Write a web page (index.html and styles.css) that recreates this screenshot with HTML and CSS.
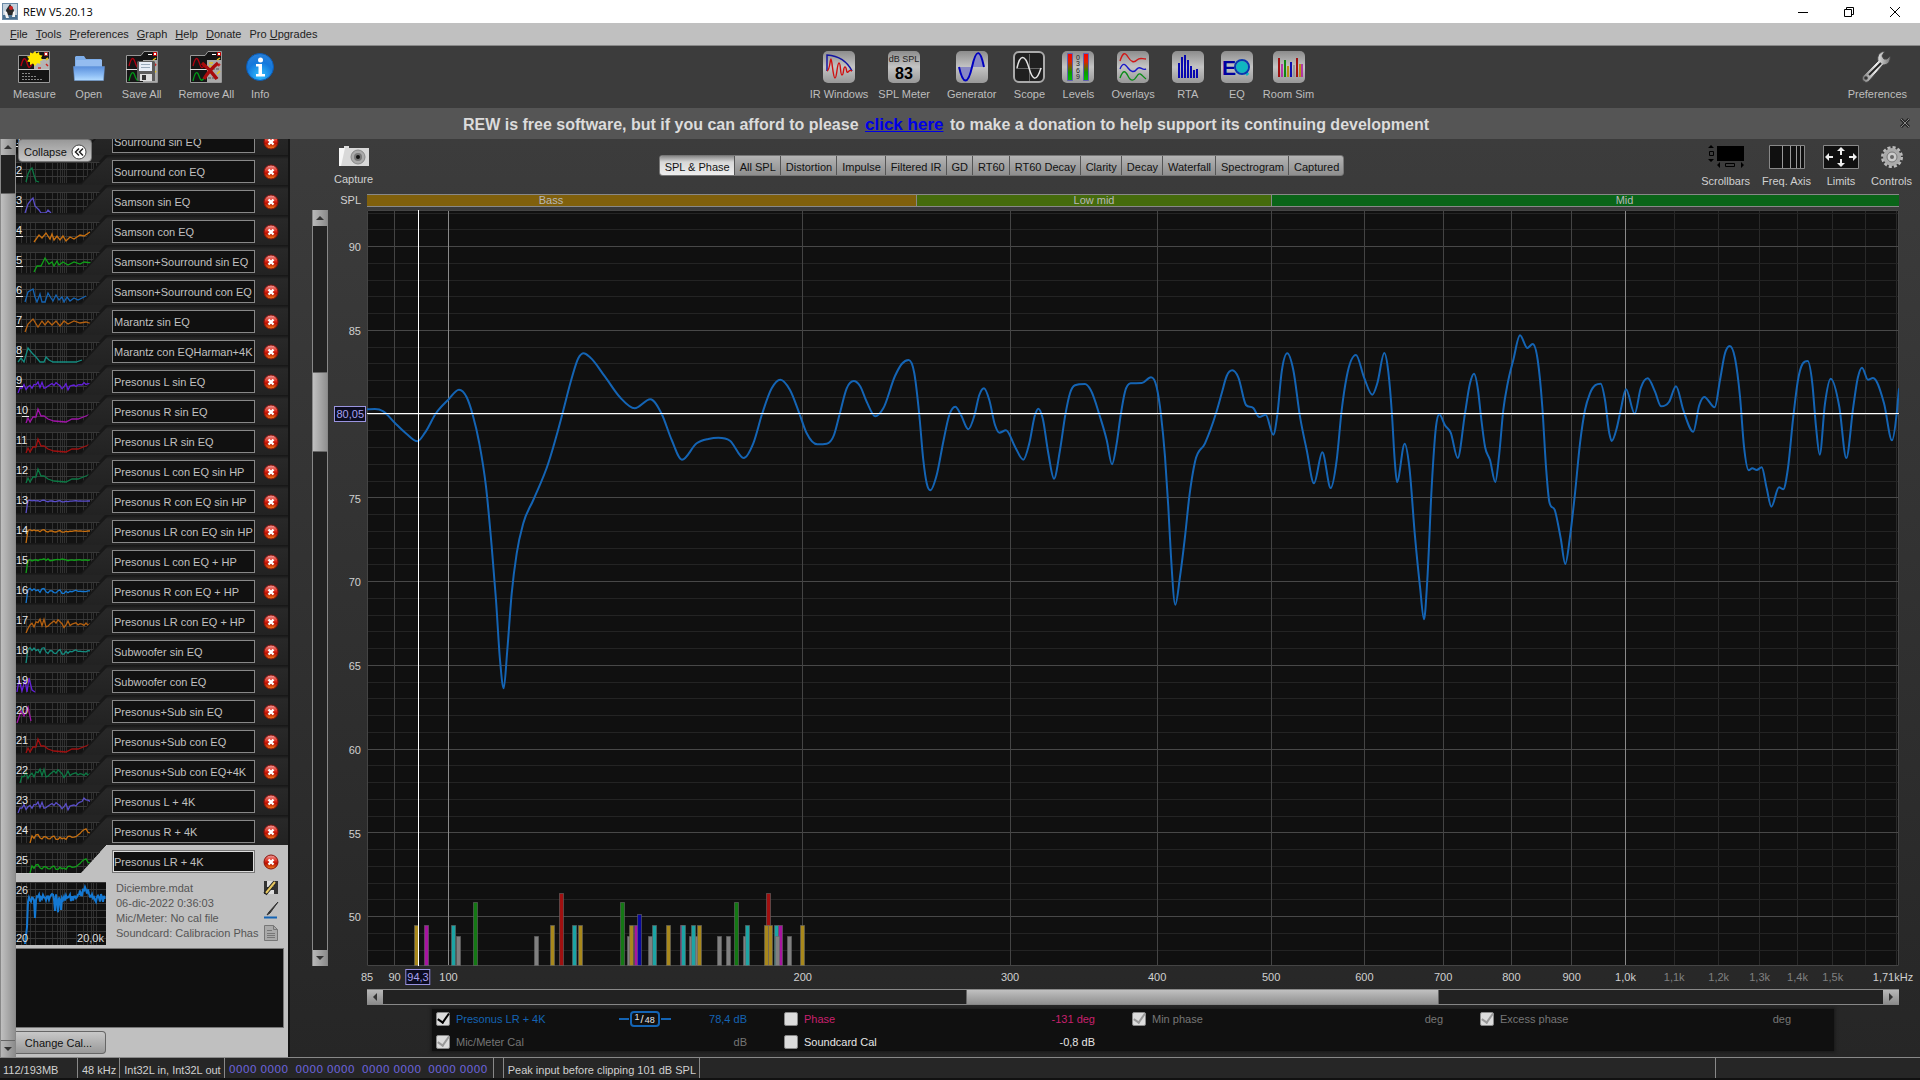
FILE: index.html
```html
<!DOCTYPE html>
<html lang="en">
<head>
    <meta charset="UTF-8">
    <meta name="viewport" content="width=device-width, initial-scale=1.0">
    <title>REW V5.20.13</title>
    <link rel="stylesheet" href="styles.css">
</head>
<body>
    <header class="titlebar">
        <svg class="app-icon" width="16" height="17" viewBox="0 0 16 17">
            <rect x="0.5" y="0.5" width="15" height="16" fill="#c4d2de" stroke="#6b8aa6"/>
            <path d="M1 12h14v4H1z" fill="#4a7090"/>
            <path d="M8 1l4 6-1 5H5L4 7z" fill="#2b2b2b"/>
            <circle cx="9" cy="5" r="2" fill="#c22"/>
            <path d="M2 8l3 1 2 6H4zM11 9l2-1v6h-3z" fill="#f4f4f4"/>
        </svg>
        <span class="app-title">REW V5.20.13</span>
        <div class="window-buttons">
            <button type="button" aria-label="Minimize"><svg width="12" height="12"><path d="M1 6.5h10" stroke="#000"/></svg></button>
            <button type="button" aria-label="Restore"><svg width="12" height="12"><path d="M1.5 3.5h7v7h-7zM3.500 3V1.500h7v7H9" fill="none" stroke="#000"/></svg></button>
            <button type="button" aria-label="Close"><svg width="12" height="12"><path d="M1 1l10 10M11 1L1 11" stroke="#000"/></svg></button>
        </div>
    </header>

    <nav class="menubar">
        <a href="#"><u>F</u>ile</a>
        <a href="#"><u>T</u>ools</a>
        <a href="#"><u>P</u>references</a>
        <a href="#"><u>G</u>raph</a>
        <a href="#"><u>H</u>elp</a>
        <a href="#"><u>D</u>onate</a>
        <a href="#">Pro <u>U</u>pgrades</a>
    </nav>

    <!-- Shared gradients and shapes -->
    <svg class="defs" width="0" height="0" aria-hidden="true">
        <defs>
            <linearGradient id="tile" x1="0" y1="0" x2="0" y2="1"><stop offset="0" stop-color="#8c8c8c"/><stop offset="0.5" stop-color="#c4c4c4"/><stop offset="1" stop-color="#989898"/></linearGradient>
            <linearGradient id="meter" x1="0" y1="0" x2="0" y2="1"><stop offset="0" stop-color="#f00"/><stop offset="0.3" stop-color="#e02000"/><stop offset="0.7" stop-color="#0a9a00"/><stop offset="1" stop-color="#00c000"/></linearGradient>
            <linearGradient id="folder" x1="0" y1="0" x2="0" y2="1"><stop offset="0" stop-color="#5a8fdc"/><stop offset="0.6" stop-color="#8cbcf4"/><stop offset="1" stop-color="#b4dcff"/></linearGradient>
            <linearGradient id="metal" x1="0" y1="0" x2="1" y2="0"><stop offset="0" stop-color="#777"/><stop offset="0.5" stop-color="#eee"/><stop offset="1" stop-color="#777"/></linearGradient>
            <linearGradient id="redball" x1="0" y1="0" x2="0" y2="1"><stop offset="0" stop-color="#f0a0a0"/><stop offset="0.45" stop-color="#d82818"/><stop offset="0.6" stop-color="#b81000"/><stop offset="1" stop-color="#f08020"/></linearGradient>
            <radialGradient id="blueball" cx="0.5" cy="0.8" r="0.8"><stop offset="0" stop-color="#30c0ff"/><stop offset="0.6" stop-color="#1478dc"/><stop offset="1" stop-color="#2a80d8"/></radialGradient>
            <symbol id="doc" viewBox="0 0 32 32">
                <path d="M0.500 31.500V4.500H15l3-4h13.500v31z" fill="#151515" stroke="#999"/>
                <path d="M17 9h14v22H17z" fill="#aaa"/>
                <path d="M22 3h4v1h-4z" fill="#fff"/><path d="M27.500 1.500h3v3h-3z" fill="#fff" stroke="#c00"/>
                <path d="M27 9l3-2M19 12h4M19 15h3M27 23l3-3" stroke="#e0c020" stroke-width="1.500"/>
                <path d="M28 15l2-2" stroke="#c22" stroke-width="2"/>
                <path d="M3 15c2-8 4-10 6-4s3 8 6 2" fill="none" stroke="#b00010" stroke-width="1.300"/>
                <path d="M0 18.500h17" stroke="#ddd"/>
                <path d="M3 30c2-9 4-11 6-5s3 5 6 1" fill="none" stroke="#009a18" stroke-width="1.300"/>
                <path d="M18 18h11M18 27h10" stroke="#555" stroke-dasharray="3 1"/>
            </symbol>
            <symbol id="del" viewBox="0 0 16 16">
                <circle cx="8" cy="8" r="7" fill="url(#redball)" stroke="#8a1008"/>
                <path d="M5.500 5.500l5 5M10.500 5.500l-5 5" stroke="#fff" stroke-width="2.400"/>
            </symbol>
        </defs>
    </svg>

    <div class="toolbar">
        <div class="tool-group">
            <button type="button" class="tool">
                <svg width="32" height="32" viewBox="0 0 32 32">
                    <path d="M0.500 31.500V4.500H14l3-4h14.500v31z" fill="#151515" stroke="#999"/>
                    <path d="M16 8h15v11H16z" fill="#b4b4b4"/><path d="M0 18.500h31" stroke="#ccc"/>
                    <path d="M26.500 1.500h3v3h-3z" fill="#fff" stroke="#b33"/>
                    <path d="M28 9l2-2" stroke="#e0c020" stroke-width="2"/>
                    <path d="M28 13l2 2M20 17h3" stroke="#c22" stroke-width="1.500"/>
                    <path d="M3 15c2-8 4-10 6-3s3 4 5 1" fill="none" stroke="#b00010" stroke-width="1.400"/>
                    <path d="M4 22.500h8M4 25.500h15M4 28.500h21" stroke="#888" stroke-dasharray="2 1"/>
                    <path d="M17 0l1.500 2.500L21 1l.5 3 3 .5-1.500 2.500 2 2-3 1 .5 3-3-1L17 15l-2-2.500-3 1.500v-3l-3-.5 2-2.500-2-2.500 3-.5V1.500l3 1z" fill="#ffe800"/>
                </svg>
                <span>Measure</span>
            </button>
            <button type="button" class="tool">
                <svg width="32" height="32" viewBox="0 0 32 32">
                    <path d="M2 6l1-1h8l2 3h15l1 1v7H2z" fill="#7eaeea"/><path d="M3 9h26v6H3z" fill="#94bcf0"/>
                    <path d="M0.500 15.500h31l-1 14h-29z" fill="url(#folder)" stroke="#6c9cdc" stroke-width="0.500"/>
                </svg>
                <span>Open</span>
            </button>
            <button type="button" class="tool">
                <svg width="32" height="32" viewBox="0 0 32 32">
                    <use href="#doc"/>
                    <path d="M11 11l1-1h16l1 1v19H13l-2-1z" fill="#5c5c5c"/><path d="M13 11h13v9H13z" fill="#e8eef8"/><path d="M15 13.500h9M15 16.500h9" stroke="#9ab"/>
                    <path d="M14 23h12v7H14z" fill="#ddd"/><path d="M16 24h4v5h-4z" fill="#333"/>
                </svg>
                <span>Save All</span>
            </button>
            <div class="tool-pair">
                <button type="button" class="tool">
                    <svg width="32" height="32" viewBox="0 0 32 32"><use href="#doc"/><path d="M12 12c5 4 10 9 15 16M28 12c-6 5-10 9-14 16" stroke="#a80c0c" stroke-width="3.500" fill="none"/></svg>
                    <span>Remove All</span>
                </button>
                <button type="button" class="tool">
                    <svg width="32" height="32" viewBox="0 0 32 32">
                        <circle cx="16" cy="16" r="13.500" fill="url(#blueball)" stroke="#0a5cb8"/>
                        <circle cx="16.500" cy="9" r="2.500" fill="#fff"/><path d="M12 13h6v10h3v2.500h-9V23h2.500v-7.500H12z" fill="#fff"/>
                    </svg>
                    <span>Info</span>
                </button>
            </div>
        </div>

        <div class="tool-group">
            <div class="tool-pair">
                <button type="button" class="tool">
                    <svg width="32" height="32" viewBox="0 0 32 32">
                        <rect width="32" height="32" rx="5" fill="url(#tile)"/>
                        <path d="M4 20V4c12 1 20 6 25 16" fill="none" stroke="#1414a0" stroke-width="1.500"/>
                        <path d="M4 20c3-1 3-12 4-12s2 19 4 19 2-15 4-15 1 12 3 12 1-8 3-8 1 7 3 5 2-2 4-1" fill="none" stroke="#d01010" stroke-width="1.400"/>
                    </svg>
                    <span>IR Windows</span>
                </button>
                <button type="button" class="tool">
                    <svg width="32" height="32" viewBox="0 0 32 32">
                        <rect width="32" height="32" rx="5" fill="url(#tile)"/>
                        <text x="16" y="11" class="icon-text small">dB SPL</text>
                        <text x="16" y="28" class="icon-text big">83</text>
                    </svg>
                    <span>SPL Meter</span>
                </button>
            </div>
            <button type="button" class="tool">
                <svg width="32" height="32" viewBox="0 0 32 32">
                    <rect width="32" height="32" rx="5" fill="url(#tile)"/>
                    <path d="M3 16h13c-3 18-9 18-13 0zM16 16c3-18 9-18 12 0z" fill="#8888c4"/>
                    <path d="M3 16c4 18 9 18 13 0s8-19 12 0" fill="none" stroke="#0000c0" stroke-width="2"/>
                </svg>
                <span>Generator</span>
            </button>
            <button type="button" class="tool">
                <svg width="32" height="32" viewBox="0 0 32 32">
                    <rect x="1" y="1" width="30" height="30" rx="5" fill="#202020" stroke="#aaa" stroke-width="2"/>
                    <path d="M16.500 3v27M3 17.500h26" stroke="#666"/>
                    <path d="M4 17c3-14 8-14 12 0s8 13 12 0" fill="none" stroke="#e4e4e4" stroke-width="1.500"/>
                </svg>
                <span>Scope</span>
            </button>
            <button type="button" class="tool">
                <svg width="32" height="32" viewBox="0 0 32 32">
                    <rect width="32" height="32" rx="5" fill="url(#tile)"/>
                    <path d="M5.500 2.500h5v27h-5zM21.500 2.500h5v27h-5z" fill="url(#meter)" stroke="#6060b0"/>
                    <text x="16" y="9" class="icon-text tiny">0</text><text x="16" y="15" class="icon-text tiny">3</text>
                    <text x="16" y="22" class="icon-text tiny">6</text><text x="16" y="28" class="icon-text tiny">9</text>
                </svg>
                <span>Levels</span>
            </button>
            <button type="button" class="tool">
                <svg width="32" height="32" viewBox="0 0 32 32">
                    <rect width="32" height="32" rx="5" fill="url(#tile)"/>
                    <g fill="none" stroke-width="1.400">
                        <path d="M3 10c3-9 5-9 8-4s6 6 9 3 5-1 9-1" stroke="#d01818"/>
                        <path d="M3 18c3-7 5-5 8-1s6 5 9 1 5 2 9 0" stroke="#1818c8"/>
                        <path d="M3 27c3-8 5-8 8-2s6 5 9 0 5 0 9 3" stroke="#0c8c18"/>
                    </g>
                </svg>
                <span>Overlays</span>
            </button>
            <button type="button" class="tool">
                <svg width="32" height="32" viewBox="0 0 32 32">
                    <rect width="32" height="32" rx="5" fill="url(#tile)"/>
                    <path d="M7 12v15M10 6v21M13 4v23M16 9v18M19 15v12M22 19v8M25 18v9" stroke="#0808b0" stroke-width="2"/>
                </svg>
                <span>RTA</span>
            </button>
            <div class="tool-pair">
                <button type="button" class="tool">
                    <svg width="32" height="32" viewBox="0 0 32 32">
                        <rect width="32" height="32" rx="5" fill="url(#tile)"/>
                        <circle cx="21" cy="16" r="6" fill="#10b8c0"/>
                        <path d="M24 20l3 4" stroke="#10b8c0" stroke-width="3"/>
                        <circle cx="21" cy="16" r="7" fill="none" stroke="#0a38b0" stroke-width="2"/>
                        <text x="8" y="24" class="icon-text eq">E</text>
                    </svg>
                    <span>EQ</span>
                </button>
                <button type="button" class="tool">
                    <svg width="32" height="32" viewBox="0 0 32 32">
                        <rect width="32" height="32" rx="5" fill="url(#tile)"/>
                        <g stroke-width="2">
                            <path d="M6 7v19M24 7v19" stroke="#a01010"/><path d="M9 13v13M29 13v13" stroke="#b010a0" stroke-width="1.500"/>
                            <path d="M12 9v17" stroke="#108810"/><path d="M15 15v11M27 13v13" stroke="#b89018"/>
                            <path d="M18 11v15" stroke="#1010b0"/><path d="M21 14v12" stroke="#999"/>
                        </g>
                    </svg>
                    <span>Room Sim</span>
                </button>
            </div>
        </div>

        <div class="tool-group">
            <button type="button" class="tool">
                <svg width="32" height="32" viewBox="0 0 32 32">
                    <path d="M4 31c-4-2-3-5-1-7l14-14c-1-5 1-9 7-10l-3 5 2 3h3l3-3c1 5-2 9-7 9L8 30c-1 1-3 2-4 1z" fill="url(#metal)" stroke="#444"/>
                    <path d="M8 24l12-12" stroke="#222" stroke-width="2"/><circle cx="5" cy="27" r="1.800" fill="#333"/>
                </svg>
                <span>Preferences</span>
            </button>
        </div>
    </div>

    <div class="banner">
        <p>REW is free software, but if you can afford to please <a href="#">click here</a> to make a donation to help support its continuing development</p>
        <button type="button" aria-label="Dismiss"><svg width="12" height="12"><path d="M2 2l8 8M10 2l-8 8" stroke="#222" stroke-width="3"/><path d="M2 2l8 8M10 2l-8 8" stroke="#888"/></svg></button>
    </div>

    <main class="workspace">
        <aside class="measurements">
            <div class="scroll scroll-y list-scroll">
                <span class="arrow up"></span><span class="gap"></span><span class="thumb"></span><span class="arrow down"></span>
            </div>
            <button type="button" class="collapse">Collapse
                <svg width="16" height="16"><circle cx="8" cy="8" r="7" fill="#fff" stroke="#444"/><path d="M8 4.500L4.500 8 8 11.500M12 4.500L8.500 8l3.500 3.500" fill="none" stroke="#222" stroke-width="1.500"/></svg>
            </button>
            <div class="list">
                <div id="rows" class="rows"></div>
                <section class="details">
                    <div class="details-top">
                        <svg id="bigThumb" class="big-thumb" width="90" height="63" viewBox="0 0 90 63"></svg>
                        <div class="info">
                            <p>Diciembre.mdat</p>
                            <p>06-dic-2022 0:36:03</p>
                            <p>Mic/Meter: No cal file</p>
                            <p>Soundcard: Calibracion Phas</p>
                        </div>
                        <div class="info-icons">
                            <svg width="16" height="16"><path d="M1 1h14v13H1z" fill="#333"/><path d="M4 1h7v6H4zM5 10h6v4H5z" fill="#ddd"/><path d="M2 14L12 2" stroke="#222" stroke-width="4"/><path d="M3 13L12 2" stroke="#e8c860" stroke-width="2"/></svg>
                            <svg width="16" height="18"><path d="M15 1L6 11l-2 3 3-2z" fill="#333" stroke="#333"/><path d="M1 16.500h13" stroke="#1464b4" stroke-width="2"/></svg>
                            <svg width="16" height="18"><path d="M1.500 1.500h9l4 4v11h-13z" fill="#aaa" stroke="#777"/><path d="M10.500 1.500v4h4M4 6.500h5M4 9.500h8M4 11.500h8M4 13.500h8" fill="none" stroke="#777"/></svg>
                        </div>
                    </div>
                    <textarea class="notes" aria-label="Notes"></textarea>
                    <button type="button" class="change-cal">Change Cal...</button>
                </section>
            </div>
        </aside>

        <section class="graph">
            <div class="graph-head">
                <button type="button" class="tool capture">
                    <svg width="30" height="22" viewBox="0 0 30 22"><path d="M5 1h5v3H5z" fill="#ddd"/><path d="M0 3h30v18H0z" fill="#d8d8d8"/><path d="M0 3h6L2 21H0z" fill="#f6f6f6"/><circle cx="19" cy="12" r="7" fill="#aaa" stroke="#888"/><circle cx="19" cy="12" r="4" fill="#777"/><circle cx="19" cy="12" r="2" fill="#111"/></svg>
                    <span>Capture</span>
                </button>
                <div class="tabs">
                    <button type="button" class="active">SPL &amp; Phase</button>
                    <button type="button">All SPL</button>
                    <button type="button">Distortion</button>
                    <button type="button">Impulse</button>
                    <button type="button">Filtered IR</button>
                    <button type="button">GD</button>
                    <button type="button">RT60</button>
                    <button type="button">RT60 Decay</button>
                    <button type="button">Clarity</button>
                    <button type="button">Decay</button>
                    <button type="button">Waterfall</button>
                    <button type="button">Spectrogram</button>
                    <button type="button">Captured</button>
                </div>
                <div class="view-tools">
                    <button type="button" class="tool">
                        <svg width="36" height="24" viewBox="0 0 36 24"><path d="M9 1h27v15H9z" fill="#000"/><path d="M3 0l3 3H0zM3 17l3-3H0zM9 20l3-3v6zM36 20l-3-3v6z" fill="#000"/><path d="M1.500 6.500h4v4h-4zM17.500 18.500h9v3h-9z" fill="none" stroke="#000"/></svg>
                        <span>Scrollbars</span>
                    </button>
                    <button type="button" class="tool">
                        <svg width="36" height="24" viewBox="0 0 36 24"><path d="M0.500 0.500h35v23h-35z" fill="#101010" stroke="#888"/><path d="M13.500 1v22M21.500 1v22M27.500 1v22M31.500 1v22" stroke="#999"/></svg>
                        <span>Freq. Axis</span>
                    </button>
                    <button type="button" class="tool">
                        <svg width="36" height="24" viewBox="0 0 36 24"><path d="M0.500 0.500h35v23h-35z" fill="#101010" stroke="#888"/><path d="M18 2l4 4h-3v4h-2V6h-3zM18 22l4-4h-3v-4h-2v4h-3zM2 12l4-4v3h4v2H6v3zM34 12l-4-4v3h-4v2h4v3z" fill="#eee"/></svg>
                        <span>Limits</span>
                    </button>
                    <button type="button" class="tool">
                        <svg width="24" height="24" viewBox="0 0 24 24"><circle cx="12" cy="12" r="9.500" fill="none" stroke="#bbb" stroke-width="3" stroke-dasharray="3 2"/><circle cx="12" cy="12" r="9" fill="#aaa"/><circle cx="12" cy="12" r="5" fill="#ccc" stroke="#777"/><circle cx="12" cy="12" r="2" fill="#666"/></svg>
                        <span>Controls</span>
                    </button>
                </div>
            </div>

            <div class="chart">
                <span class="spl">SPL</span>
                <div class="bands">
                    <span class="bass">Bass</span><span class="lowmid">Low mid</span><span class="mid">Mid</span>
                </div>
                <div class="scroll scroll-y level-scroll">
                    <span class="arrow up"></span><span class="gap"></span><span class="thumb"></span><span class="gap after"></span><span class="arrow down"></span>
                </div>
                <div id="yAxis" class="y-axis"></div>
                <svg id="plot" class="plot" viewBox="367 210 1532 756" preserveAspectRatio="none"></svg>
                <div id="xAxis" class="x-axis"></div>
                <div class="scroll scroll-x freq-scroll">
                    <span class="arrow left"></span><span class="gap"></span><span class="thumb"></span><span class="gap after"></span><span class="arrow right"></span>
                </div>
            </div>

            <div class="legend">
                <div class="entry trace">
                    <input type="checkbox" id="cbSpl" checked><label for="cbSpl">Presonus LR + 4K</label>
                    <span class="smoothing"><sup>1</sup>/<sub>48</sub></span><output>78,4 dB</output>
                </div>
                <div class="entry phase"><input type="checkbox" id="cbPhase"><label for="cbPhase">Phase</label><output>-131 deg</output></div>
                <div class="entry off"><input type="checkbox" id="cbMin" checked disabled><label for="cbMin">Min phase</label><output>deg</output></div>
                <div class="entry off"><input type="checkbox" id="cbExcess" checked disabled><label for="cbExcess">Excess phase</label><output>deg</output></div>
                <div class="entry off"><input type="checkbox" id="cbMic" checked disabled><label for="cbMic">Mic/Meter Cal</label><output>dB</output></div>
                <div class="entry"><input type="checkbox" id="cbCard"><label for="cbCard">Soundcard Cal</label><output>-0,8 dB</output></div>
            </div>
        </section>
    </main>

    <footer class="statusbar">
        <span class="memory">112/193MB</span>
        <span>48 kHz</span>
        <span>Int32L in, Int32L out</span>
        <span class="bits">0000 0000&nbsp; 0000 0000&nbsp; 0000 0000&nbsp; 0000 0000</span>
        <span class="blank"></span>
        <span class="peak">Peak input before clipping 101 dB SPL</span>
        <span class="fill"></span>
        <span class="end"></span>
    </footer>

    <script src="script.js"></script>
</body>
</html>
```

FILE: styles.css
```css
* {
    box-sizing: border-box;
}
body {
    margin: 0;
    height: 100vh;
    display: flex;
    flex-direction: column;
    overflow: hidden;
    background: #262626;
    color: #d0d0d0;
    font: 11px/14px "Liberation Sans", Arial, sans-serif;
}
button, input, textarea {
    font: inherit;
    margin: 0;
}
button {
    border: 0;
    padding: 0;
    background: none;
    color: inherit;
}
p {
    margin: 0;
}
svg {
    display: block;
}
.defs {
    position: absolute;
}

/* Title and menu */
.titlebar {
    display: flex;
    align-items: center;
    gap: 5px;
    height: 23px;
    padding-left: 2px;
    background: #fff;
    color: #000;
}
.app-title {
    font: 11px/16px "Open Sans", "Noto Sans", sans-serif;
}
.window-buttons {
    display: flex;
    gap: 34px;
    margin-left: auto;
    padding-right: 19px;
}
.menubar {
    display: flex;
    gap: 8px;
    height: 23px;
    padding: 4px 10px;
    background: #c0c0c0;
    border-bottom: 1px solid #888;
}
.menubar a {
    color: #222;
    text-decoration: none;
}

/* Toolbar */
.toolbar {
    display: flex;
    justify-content: space-between;
    height: 62px;
    padding: 5px 13px 0;
    background: #3c3c3c;
}
.tool-group {
    display: flex;
    gap: 17px;
}
.tool-pair {
    display: flex;
    gap: 10px;
}
.tool {
    display: flex;
    flex-direction: column;
    align-items: center;
    gap: 4px;
    min-width: 32px;
    white-space: nowrap;
    color: #bebebe;
}
.icon-text {
    text-anchor: middle;
    fill: #222;
}
.small {
    font-size: 9px;
}
.big {
    font-size: 16px;
    font-weight: bold;
    fill: #000;
}
.tiny {
    font-size: 7px;
}
.eq {
    font-size: 21px;
    font-weight: bold;
    fill: #0000a0;
}

/* Donation banner */
.banner {
    display: flex;
    align-items: center;
    height: 31px;
    padding: 2px 9px 0 0;
    background: #555;
}
.banner p {
    flex: 1;
    text-align: center;
    font-size: 16px;
    line-height: 20px;
    font-weight: bold;
    color: #dcdcdc;
}
.banner a {
    margin: 0 2px;
    font-size: 17px;
    color: #0000e6;
}
.banner button {
    padding: 0 0 4px 7px;
}

.workspace {
    flex: 1;
    display: flex;
    min-height: 0;
    background: linear-gradient(#3c3c3c, #262626);
}

/* Scrollbars */
.scroll {
    display: flex;
    background: #222;
}
.scroll-y {
    flex-direction: column;
    width: 16px;
    border: solid #888;
    border-width: 0 1px;
}
.scroll-x {
    height: 16px;
    border: solid #888;
    border-width: 1px 0;
}
.arrow {
    flex: none;
    display: flex;
    align-items: center;
    justify-content: center;
    height: 16px;
    background: linear-gradient(90deg, #b8b8b8, #8c8c8c);
}
.scroll-x .arrow {
    width: 16px;
    height: 14px;
    background: linear-gradient(#b8b8b8, #8c8c8c);
}
.arrow::before {
    content: "";
    border: 4px solid transparent;
}
.up::before {
    border-top: 0;
    border-bottom-color: #333;
}
.down::before {
    border-bottom: 0;
    border-top-color: #333;
}
.left::before {
    border-left: 0;
    border-right-color: #333;
}
.right::before {
    border-right: 0;
    border-left-color: #333;
}
.thumb {
    background: linear-gradient(90deg, #c0c0c0, #909090);
    border: solid #666;
    border-width: 1px 0;
}
.scroll-x .thumb {
    background: linear-gradient(#c0c0c0, #909090);
    border-width: 0 1px;
}
.list-scroll .gap {
    flex: 38;
}
.list-scroll .thumb {
    flex: 848;
}
.level-scroll .gap {
    flex: 146;
}
.level-scroll .thumb {
    flex: 79;
}
.level-scroll .after {
    flex: 499;
}
.freq-scroll .gap {
    flex: 584;
}
.freq-scroll .thumb {
    flex: 471;
}
.freq-scroll .after {
    flex: 445;
}

/* Measurement list */
.measurements {
    position: relative;
    display: flex;
    flex: none;
    width: 290px;
    border-right: 2px solid #141414;
    overflow: hidden;
}
.collapse {
    position: absolute;
    left: 18px;
    top: 0;
    z-index: 1;
    display: flex;
    align-items: center;
    gap: 4px;
    height: 23px;
    padding: 2px 4px 0 5px;
    border: 1px solid #777;
    border-radius: 4px;
    background: linear-gradient(#999, #c8c8c8);
    color: #111;
}
.list {
    flex: 1;
    min-width: 0;
    display: flex;
    flex-direction: column;
    background: #242424;
}
.rows {
    margin-top: -14px;
}
.row {
    display: grid;
    grid-template-columns: 96px 143px 1fr;
    align-items: start;
    height: 30px;
    background: linear-gradient(#161616, #282828 4px, #222);
}
.row.selected {
    background: #c0c0c0;
}
.row-thumb {
    width: 96px;
    height: 30px;
}
.row-thumb text {
    fill: #e6e6e6;
}
.row input {
    width: 100%;
    height: 23px;
    margin-top: 5px;
    padding: 0 0 0 1px;
    border: 1px solid #888;
    background: #101010;
    color: #c0c0c0;
    outline: 0;
}
.row.selected input {
    border: 1px solid #777;
    box-shadow: inset 0 0 0 1px #ddd;
}
.row button {
    justify-self: center;
    margin: 9px 1px 0 0;
}
.details {
    flex: 1;
    display: flex;
    flex-direction: column;
    align-items: flex-start;
    gap: 3px;
    padding: 7px 4px 3px 0;
    background: #c0c0c0;
    color: #555;
}
.details-top {
    display: flex;
    width: 100%;
}
.big-thumb {
    flex: none;
    background: #101010;
}
.big-thumb text {
    fill: #ddd;
}
.info {
    flex: none;
    width: 153px;
    margin-top: -1px;
    padding-left: 10px;
    line-height: 15px;
    white-space: nowrap;
}
.info-icons {
    display: flex;
    flex-direction: column;
    gap: 5px;
    padding-left: 4px;
    margin-top: -2px;
}
.notes {
    flex: 1;
    width: 100%;
    resize: none;
    background: #101010;
    border: 1px solid #777;
    border-left: 0;
}
.change-cal {
    width: 90px;
    height: 23px;
    padding-right: 4px;
    border: 1px solid #666;
    border-left: 0;
    border-radius: 0 4px 4px 0;
    background: linear-gradient(#c8c8c8, #999);
    color: #111;
}

/* Graph */
.graph {
    flex: 1;
    min-width: 0;
    display: flex;
    flex-direction: column;
}
.graph-head {
    display: grid;
    grid-template-columns: auto 4fr auto 5fr auto;
    height: 55px;
    padding: 6px 8px 0 44px;
}
.graph-head .tool {
    color: #d0d0d0;
    gap: 5px;
}
.tabs {
    grid-column: 3;
    display: flex;
    height: 21px;
    margin-top: 10px;
    border: 1px solid #777;
    border-radius: 3px;
    background: linear-gradient(#b4b4b4, #8e8e8e);
    color: #111;
}
.tabs button {
    padding: 2px 4px 0 5px;
    border-right: 1px solid #555;
    white-space: nowrap;
}
.tabs button:last-child {
    border-right: 0;
}
.tabs .active {
    border-radius: 3px 0 0 3px;
    background: linear-gradient(#888, #d8d8d8 6px, #eee);
}
.view-tools {
    grid-column: 5;
    display: flex;
    gap: 12px;
}
.chart {
    flex: 1;
    display: grid;
    grid-template-columns: 16px 39px 1fr;
    grid-template-rows: 13px 1fr 23px 16px;
    min-height: 0;
    padding: 0 21px 0 22px;
}
.spl {
    grid-column: 1 / 3;
    padding-right: 6px;
    line-height: 12px;
    text-align: right;
}
.bands {
    display: grid;
    grid-template-columns: 549fr 355fr 628fr;
    border: solid #888;
    border-width: 1px 0;
    line-height: 11px;
    text-align: center;
    color: #b8b8b8;
}
.bands span + span {
    border-left: 1px solid #888;
}
.bass {
    background: #80600c;
    padding-right: 181px;
}
.lowmid {
    background: #456b0c;
}
.mid {
    background: #0a6418;
    padding-left: 78px;
}
.level-scroll {
    margin-top: 3px;
}
.y-axis {
    position: relative;
    margin-top: 3px;
}
.y-axis span {
    position: absolute;
    right: 6px;
    margin-top: 1px;
    transform: translateY(-50%);
}
.plot {
    width: 100%;
    height: 100%;
    min-height: 0;
    padding-top: 3px;
    background: #101010 content-box;
}
.plot path, .plot line {
    vector-effect: non-scaling-stroke;
}
.x-axis {
    grid-column: 3;
    position: relative;
}
.x-axis span {
    position: absolute;
    top: 4px;
    transform: translateX(-50%);
    white-space: nowrap;
}
.x-axis .faint {
    color: #808080;
}
.y-axis .cursor, .x-axis .cursor {
    margin: 0;
    padding: 0 1px;
    border: 1px solid #9a94e0;
    background: #0c0c20;
    color: #a8a2f0;
}
.y-axis .cursor {
    right: 1px;
}
.x-axis .cursor {
    top: 3px;
}
.freq-scroll {
    grid-column: 3;
}

/* Trace legend */
.legend {
    display: grid;
    grid-template-columns: repeat(4, 1fr);
    row-gap: 5px;
    height: 42px;
    margin: 4px 86px 6px 142px;
    padding: 1px 6px 1px 4px;
    background: #101010;
    box-shadow: 0 0 3px 1px #181818;
}
.entry {
    display: flex;
    align-items: center;
    height: 18px;
    padding-right: 37px;
    color: #e6e6e6;
}
.entry input {
    appearance: none;
    display: flex;
    align-items: center;
    justify-content: center;
    width: 14px;
    height: 14px;
    margin-right: 6px;
    border: 1px solid #888;
    border-radius: 2px;
    background: #dcdcdc;
}
.entry input:checked::after {
    content: "";
    width: 5px;
    height: 10px;
    margin-bottom: 4px;
    border: solid #000;
    border-width: 0 2px 2px 0;
    transform: rotate(35deg);
}
.entry input:disabled::after {
    border-color: #999;
}
.entry output {
    margin-left: auto;
}
.trace {
    color: #1464b4;
}
.phase {
    color: #c8206e;
}
.off {
    color: #767676;
}
.smoothing {
    display: flex;
    align-items: center;
    gap: 1px;
    height: 16px;
    margin-left: 84px;
    color: #e6e6e6;
    border: 2px solid #1464b4;
    border-radius: 4px;
    padding: 0 3px;
}
.smoothing::before, .smoothing::after {
    content: "";
    width: 10px;
    height: 2px;
    margin-left: -16px;
    margin-right: 5px;
    background: #1464b4;
}
.smoothing::after {
    margin-left: 5px;
    margin-right: -16px;
}
.smoothing sup, .smoothing sub {
    font-size: 9px;
    line-height: 9px;
}
.smoothing sup {
    margin-bottom: 3px;
}
.smoothing sub {
    margin-top: 2px;
}

/* Status bar */
.statusbar {
    display: flex;
    height: 23px;
    border-top: 1px solid #888;
    border-bottom: 2px solid #111;
    background: #262626;
    line-height: 24px;
    white-space: nowrap;
}
.statusbar span {
    padding: 0 3px 0 4px;
    border-right: 1px solid #888;
}
.statusbar .memory {
    width: 78px;
    padding-left: 3px;
}
.statusbar .bits {
    width: 269px;
    font-family: "DejaVu Sans", sans-serif;
    color: #6a62d8;
}
.statusbar .blank {
    width: 10px;
}
.statusbar .fill {
    flex: 1;
}
.statusbar .end {
    width: 204px;
    border-right: 0;
}
```

FILE: script.js
```js
const NS = 'http://www.w3.org/2000/svg';

function add(parent, tag, attrs, text) {
    const el = document.createElementNS(NS, tag);
    for (const k in attrs) el.setAttribute(k, attrs[k]);
    if (text) el.textContent = text;
    parent.appendChild(el);
    return el;
}

// Small repeatable noise for the thumbnails
function noise(i) {
    const s = Math.sin(i * 127.1) * 43758.5453;
    return (s - Math.floor(s)) * 2 - 1;
}

// level: resting height, amp: noise, from: first x, rise: bump near the end
function rough(level, amp, from, rise) {
    const pts = [`${from},21`];
    for (let x = from + 2; x < 76; x += 2) {
        const fade = x > 52 ? 0.3 : 1;
        const bump = rise ? Math.max(0, 1 - Math.abs(x - 69) / 10) * rise : 0;
        pts.push(`${x},${(level + noise(x + level) * amp * fade - bump).toFixed(1)}`);
    }
    return pts.join(' ');
}

const hump = '10,21 12,16 14,20 17,15 20,15 22,7 25,14 28,14 32,17 38,19 50,20 56,17 62,17 70,14 78,11';

const rows = [
    ['Sourround sin EQ', '#1464b4', ''],
    ['Sourround con EQ', '#0c7844', '10,20 12,12 14,8 16,6 18,13 20,19 23,20'],
    ['Samson sin EQ', '#5a4ec8', '9,21 12,12 15,8 17,6 19,14 23,18 25,21 30,21 32,18 35,21'],
    ['Samson con EQ', '#c87010', '18,20 23,13 26,16 30,11 34,17 36,12 38,18 41,14 44,18 47,14 50,19 54,15 58,17 64,13 68,14 74,10'],
    ['Samson+Sourround sin EQ', '#10a018', '18,20 21,14 25,14 29,6 33,12 36,10 38,14 41,9 43,13 47,10 52,13 58,10 64,12 68,10 76,11'],
    ['Samson+Sourround con EQ', '#1464b4', '9,20 12,10 17,7 19,15 21,20 24,12 26,20 29,20 32,11 35,16 37,19 40,13 43,18 46,15 48,20 51,15 54,19 58,16 62,18 70,14'],
    ['Marantz sin EQ', '#b46010', '9,20 12,12 17,7 22,15 26,9 29,13 32,9 36,13 40,9 44,14 48,9 52,12 58,9 64,11 70,10 76,12'],
    ['Marantz con EQHarman+4K', '#148c80', '2,20 5,16 8,20 12,6 16,11 20,15 24,20 28,20 30,15 33,18 37,20 60,20 66,18'],
    ['Presonus L sin EQ', '#6420dc', rough(14, 4, 2, 3)],
    ['Presonus R sin EQ', '#a014a8', hump],
    ['Presonus LR sin EQ', '#a01010', hump],
    ['Presonus L con EQ sin HP', '#0c7844', hump],
    ['Presonus R con EQ sin HP', '#5a4ec8', rough(9, 1, 10)],
    ['Presonus LR con EQ sin HP', '#c87010', rough(9, 1.5, 10)],
    ['Presonus L con EQ + HP', '#10a018', rough(8, 1.2, 10)],
    ['Presonus R con EQ + HP', '#1478d2', rough(9, 3, 10)],
    ['Presonus LR con EQ + HP', '#b46010', rough(12, 5, 10)],
    ['Subwoofer sin EQ', '#148c80', rough(9, 4, 10)],
    ['Subwoofer con EQ', '#6420dc', '1,20 3,8 6,19 9,8 11,20 13,6 16,18 19,20'],
    ['Presonus+Sub sin EQ', '#a014a8', '1,21 5,9 8,14 12,5 15,19'],
    ['Presonus+Sub con EQ', '#a01010', hump],
    ['Presonus+Sub con EQ+4K', '#0c7844', rough(12, 5, 4)],
    ['Presonus L + 4K', '#5a4ec8', rough(14, 4, 2, 8)],
    ['Presonus R + 4K', '#c87010', rough(15, 3, 14, 8)],
    ['Presonus LR + 4K', '#10a018', rough(15, 3, 14, 8)]
];

function thumbGrid(svg, w, top, h) {
    for (const x of [5, 10, 14, 19, 29, 36, 41, 44, 46, 48, 50, 60, 67, 71, 75, 77, 80]) {
        if (x < w) add(svg, 'path', { d: `M${x + 0.5} ${top}v${h}`, stroke: '#303030' });
    }
    for (let y = top + 0.5; y < top + h; y += 7) {
        add(svg, 'path', { d: `M0 ${y}h${w}`, stroke: '#383838' });
    }
}

const rowBox = document.getElementById('rows');
rows.forEach(([name, color, trace], i) => {
    const row = document.createElement('div');
    const selected = i === rows.length - 1;
    row.className = selected ? 'row selected' : 'row';

    const svg = add(row, 'svg', { class: 'row-thumb', viewBox: '0 0 96 30' });
    // slanted card edge, then the thumbnail inside it
    add(svg, 'path', { d: 'M0 0H91L65 28H0z', fill: '#242424' });
    add(svg, 'path', { d: 'M0 28H65L91 0', fill: 'none', stroke: selected ? '#d0d0d0' : '#181818', 'stroke-width': selected ? 1 : 3 });
    const clip = add(svg, 'clipPath', { id: 'clip' + i });
    add(clip, 'path', { d: 'M0 7H84L65 28H0z' });
    const g = add(svg, 'g', { 'clip-path': `url(#clip${i})` });
    add(g, 'path', { d: 'M0 7h96v21H0z', fill: '#121212' });
    thumbGrid(g, 96, 7, 21);
    add(g, 'polyline', { points: trace, fill: 'none', stroke: color, 'stroke-width': 1.3, transform: 'translate(0 7)' });
    add(svg, 'text', { x: 0, y: 19 }, String(i + 1));
    if (i < 10) add(svg, 'path', { d: i < 9 ? 'M0 21.5h7' : 'M6 21.5h7', stroke: '#e6e6e6' });

    const input = document.createElement('input');
    input.type = 'text';
    input.value = name;
    input.setAttribute('aria-label', 'Measurement ' + (i + 1));
    row.appendChild(input);

    const del = document.createElement('button');
    del.type = 'button';
    del.setAttribute('aria-label', 'Remove ' + name);
    del.innerHTML = '<svg width="16" height="16"><use href="#del"/></svg>';
    row.appendChild(del);
    rowBox.appendChild(row);
});

// Thumbnail of the current measurement
const big = document.getElementById('bigThumb');
thumbGrid(big, 90, 0, 63);
let bigTrace = 'M9 62L11 45 12 20';
for (let x = 13; x < 90; x++) {
    const bump = Math.max(0, 1 - Math.abs(x - 68) / 12) * 8;
    const dip = x === 19 ? 18 : (x > 36 && x < 46 && x % 3 === 0 ? 12 : 0);
    bigTrace += ` ${x} ${(16 + noise(x) * 4 - bump + dip).toFixed(1)}`;
}
add(big, 'path', { d: bigTrace, fill: 'none', stroke: '#1478d2', 'stroke-width': 2 });
add(big, 'text', { x: 0, y: 12 }, '26');
add(big, 'text', { x: 0, y: 60 }, '20');
add(big, 'text', { x: 88, y: 60, 'text-anchor': 'end' }, '20,0k');

// Main plot
const LEFT = 367, TOP = 210, W = 1532, H = 756;
const fx = f => 448.5 + 1177 * Math.log10(f / 100);
const dy = db => 246.5 + (90 - db) * 16.75;
const snap = v => Math.floor(v) + 0.5;

const plot = document.getElementById('plot');
function line(x1, y1, x2, y2, stroke) {
    add(plot, 'line', { x1, y1, x2, y2, stroke, 'shape-rendering': 'crispEdges' });
}
for (let f = 1100; f <= 1700; f += 100) line(snap(fx(f)), TOP, snap(fx(f)), TOP + H, '#292929');
for (let db = 92; db >= 48; db--) {
    if (db % 5) line(LEFT, snap(dy(db)), LEFT + W, snap(dy(db)), '#242424');
}
for (let db = 90; db >= 50; db -= 5) line(LEFT, snap(dy(db)), LEFT + W, snap(dy(db)), '#484848');
for (const f of [90, 200, 300, 400, 500, 600, 700, 800, 900]) line(snap(fx(f)), TOP, snap(fx(f)), TOP + H, '#444');
for (const f of [100, 1000]) line(snap(fx(f)), TOP, snap(fx(f)), TOP + H, '#8a8a8a');
add(plot, 'path', { d: `M${LEFT + 0.5} ${TOP + 0.5}H${LEFT + W - 0.5}V${TOP + H - 0.5}H${LEFT + 0.5}z`, fill: 'none', stroke: '#444' });

// Room modes: [x, kind]
const kinds = {
    y: ['#a8881c', 925], m: ['#a814a0', 925], c: ['#1ca4a4', 925], n: ['#808080', 936],
    g: ['#147814', 902], r: ['#a01010', 893], b: ['#0808a0', 914]
};
const modes = [
    [414, 'y'], [424, 'm'], [451, 'c'], [456, 'n'], [473, 'g'], [534, 'n'], [550, 'y'], [559, 'r'],
    [572, 'c'], [578, 'y'], [620, 'g'], [627, 'n'], [629, 'y'], [634, 'm'], [637, 'b'], [648, 'n'],
    [652, 'c'], [666, 'y'], [680, 'm'], [681, 'c'], [689, 'n'], [694, 'n'], [691, 'c'], [697, 'y'],
    [717, 'n'], [726, 'n'], [734, 'g'], [743, 'n'], [745, 'c'], [766, 'r'], [764, 'y'], [768, 'y'],
    [774, 'c'], [778, 'm'], [775, 'n'], [787, 'n'], [800, 'y']
];
for (const [x, k] of modes) {
    const [fill, y] = kinds[k];
    add(plot, 'rect', { x: x + 0.5, y: y + 0.5, width: 4, height: 965 - y, fill, stroke: '#666', 'stroke-opacity': 0.6 });
}

const curve = [
    367, 409.3, 375, 409, 383.3, 411.3, 394.7, 422.7, 406.7, 434, 417.3, 441.3, 425, 432.7, 436, 413.3,
    448.3, 399.7, 459, 389.7, 466.7, 397.3, 472.7, 414.7, 479.3, 443.3, 486, 486.7, 491.7, 546.7, 496, 600,
    500, 660, 503.7, 688.3, 507.3, 650, 511.7, 593.3, 516.7, 553.3, 523.3, 523.3, 533.3, 500, 548.3, 463.3,
    556.7, 435, 562.7, 412.7, 571.7, 378.3, 578.3, 358.3, 583.7, 353.3, 590, 357.3, 605, 376.7, 620, 397.3,
    634.7, 408.3, 650.3, 399.3, 661.7, 414, 671.7, 440, 682, 459.7, 696.7, 443.3, 708.3, 439, 718.3, 437.7,
    730, 440.7, 743.7, 458, 753.3, 443.3, 762.3, 413.3, 771.7, 388.3, 780.3, 379.7, 790, 390, 799.3, 413.3,
    806.7, 433.3, 817.3, 444.3, 826.7, 443.7, 834, 435, 840, 412.7, 846.7, 388.3, 853.7, 381, 860, 386,
    866.7, 401.7, 875.3, 416.3, 883.3, 408.3, 895, 376, 901.7, 364, 908.7, 360, 914.3, 373.3, 919.3, 415,
    923.3, 460, 926.7, 483.3, 930.3, 490.3, 936.7, 475, 943.3, 441.7, 949.3, 415, 955.3, 406.7, 961, 415,
    968.3, 429.3, 974.3, 416, 979.3, 395, 984, 388.3, 989.3, 400, 995, 425, 999.3, 432.7, 1006, 430.3,
    1015, 446.7, 1023.3, 459.7, 1029.3, 443.3, 1035, 415, 1038.3, 408.7, 1042.7, 418.3, 1048.3, 453.3, 1054, 478.7,
    1060, 450, 1065.3, 415, 1070, 393.3, 1075, 385.3, 1085, 384, 1090.7, 390, 1100, 416.7, 1106.7, 440,
    1112, 464.3, 1116.7, 443.3, 1120.7, 415, 1125, 391.7, 1130.7, 383.3, 1141.7, 383, 1151, 377.3, 1156.7, 387.3,
    1161, 415, 1165, 456.7, 1168.3, 506.7, 1171, 556.7, 1175.3, 604.7, 1180, 576.7, 1185, 536.7, 1189.3, 496.7,
    1195, 461.7, 1205, 443.3, 1216, 413.3, 1221.7, 393.3, 1226.7, 376, 1232.3, 370.3, 1238.3, 377.3, 1246, 405,
    1253.3, 408, 1259.3, 417, 1265.7, 414.7, 1273.3, 434.7, 1277.3, 415, 1281.7, 371.7, 1287.3, 353.3, 1293.3, 370,
    1300, 416.7, 1306.7, 450, 1314, 483.3, 1322.3, 452.3, 1330.7, 488, 1336.7, 460, 1341.7, 410, 1346.7, 376.7,
    1356, 355, 1364, 377.3, 1372.3, 394.7, 1377.3, 383.3, 1384.3, 353, 1388.3, 371.7, 1392, 415, 1394.7, 460,
    1397, 482, 1404.7, 443.7, 1409.3, 466.7, 1415, 536.7, 1420, 586.7, 1424, 619.3, 1427.3, 580, 1431.7, 486.7,
    1436, 426.7, 1439.3, 414.3, 1445, 425.3, 1450.7, 432.7, 1457.7, 458, 1465, 413.3, 1470, 383.3, 1474, 373.7,
    1478, 390, 1481, 416.7, 1485, 446.7, 1490, 460, 1495.3, 482, 1499.3, 453.3, 1503.3, 410, 1507.7, 383.3,
    1513.3, 360, 1520, 335.3, 1527.3, 348, 1532.7, 344, 1537.7, 360, 1542.3, 406.7, 1546, 466.7, 1549.3, 501.7,
    1555, 510.7, 1560.7, 538.3, 1565.3, 564, 1570, 536.7, 1575, 493.3, 1580, 443.3, 1585, 410, 1590, 393.3,
    1600.7, 383.7, 1605, 400, 1609.3, 433.3, 1611.7, 441, 1616.7, 428.3, 1620.7, 410, 1626, 389.3, 1634.7, 413.7,
    1640.7, 388.3, 1647.7, 378.3, 1655, 391.7, 1661, 406.3, 1669, 402, 1676, 386.3, 1683.3, 410, 1693.3, 431.7,
    1699.3, 405, 1704.3, 397, 1714.7, 407.3, 1720, 380, 1725, 353.3, 1729.7, 346, 1735, 358.3, 1740, 396.7,
    1744, 446.7, 1748.7, 470.3, 1752.3, 468.3, 1756.7, 470, 1761.7, 467.3, 1766.7, 488.3, 1771.3, 506.7, 1779, 487.3,
    1783.3, 489.3, 1787.7, 470, 1793.3, 416.7, 1797.7, 381.7, 1807.7, 361, 1812.3, 383.3, 1816, 426.7, 1819.7, 454.7,
    1825, 403.3, 1830.7, 378.7, 1839.3, 406.7, 1846.3, 458, 1853.3, 406.7, 1857.7, 378.3, 1862, 367.7, 1868, 379.7,
    1873, 378, 1884, 403.3, 1892, 440.3, 1896.7, 413.3, 1899, 388.3
];

// Monotone cubic through the points, so peaks and dips do not overshoot
function smooth(a) {
    const n = a.length / 2;
    const x = i => a[2 * i], y = i => a[2 * i + 1];
    const slope = i => (y(i + 1) - y(i)) / (x(i + 1) - x(i));
    const tan = [];
    for (let i = 0; i < n; i++) {
        if (i === 0) tan.push(slope(0));
        else if (i === n - 1) tan.push(slope(n - 2));
        else {
            const p = slope(i - 1), q = slope(i);
            const hp = x(i) - x(i - 1), hq = x(i + 1) - x(i);
            const mean = (p * hq + q * hp) / (hp + hq);
            const limit = 3 * Math.min(Math.abs(p), Math.abs(q));
            tan.push(p * q <= 0 ? 0 : Math.sign(p) * Math.min(Math.abs(mean), limit));
        }
    }
    let d = `M${x(0)} ${y(0)}`;
    for (let i = 0; i < n - 1; i++) {
        const h = (x(i + 1) - x(i)) / 3;
        d += `C${x(i) + h} ${y(i) + h * tan[i]} ${x(i + 1) - h} ${y(i + 1) - h * tan[i + 1]} ${x(i + 1)} ${y(i + 1)}`;
    }
    return d;
}
add(plot, 'path', { d: smooth(curve), fill: 'none', stroke: '#1464b4', 'stroke-width': 2 });

// Cursor cross
line(LEFT, 413.5, LEFT + W, 413.5, '#fff');
line(418.5, TOP, 418.5, TOP + H, '#fff');

function label(box, text, prop, pos, cls) {
    const s = document.createElement('span');
    s.textContent = text;
    s.style[prop] = (pos * 100).toFixed(3) + '%';
    if (cls) s.className = cls;
    box.appendChild(s);
}
const yAxis = document.getElementById('yAxis');
for (let db = 90; db >= 50; db -= 5) {
    if (db !== 80) label(yAxis, String(db), 'top', (dy(db) - TOP) / H);
}
label(yAxis, '80,05', 'top', (413.5 - TOP) / H, 'cursor');

const xAxis = document.getElementById('xAxis');
label(xAxis, '85', 'left', 0);
for (const f of [90, 100, 200, 300, 400, 500, 600, 700, 800, 900]) {
    label(xAxis, String(f), 'left', (fx(f) - LEFT) / W);
}
label(xAxis, '1,0k', 'left', (fx(1000) - LEFT) / W);
for (let k = 11; k <= 15; k++) label(xAxis, '1,' + (k - 10) + 'k', 'left', (fx(k * 100) - LEFT) / W, 'faint');
label(xAxis, '1,71kHz', 'left', (1893 - LEFT) / W);
label(xAxis, '94,3', 'left', (418 - LEFT) / W, 'cursor');
```
